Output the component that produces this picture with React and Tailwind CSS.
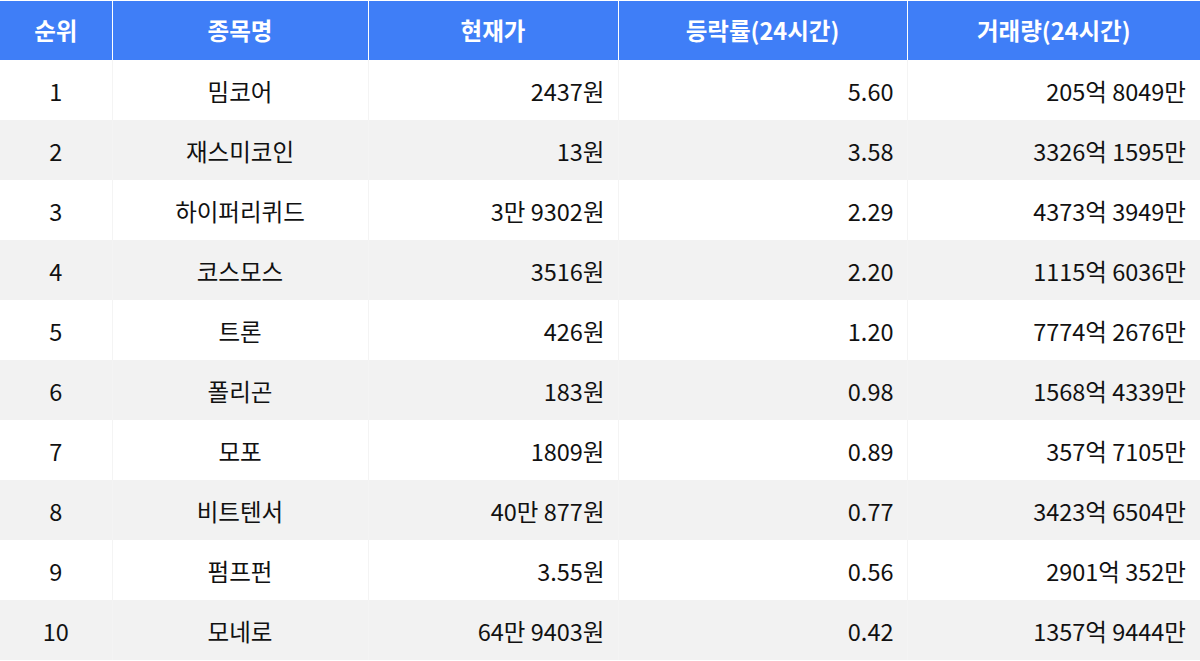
import React from 'react'

const rows = [
  ['1', '밈코어', '2437원', '5.60', '205억 8049만'],
  ['2', '재스미코인', '13원', '3.58', '3326억 1595만'],
  ['3', '하이퍼리퀴드', '3만 9302원', '2.29', '4373억 3949만'],
  ['4', '코스모스', '3516원', '2.20', '1115억 6036만'],
  ['5', '트론', '426원', '1.20', '7774억 2676만'],
  ['6', '폴리곤', '183원', '0.98', '1568억 4339만'],
  ['7', '모포', '1809원', '0.89', '357억 7105만'],
  ['8', '비트텐서', '40만 877원', '0.77', '3423억 6504만'],
  ['9', '펌프펀', '3.55원', '0.56', '2901억 352만'],
  ['10', '모네로', '64만 9403원', '0.42', '1357억 9444만'],
]

const headers = ['순위', '종목명', '현재가', '등락률(24시간)', '거래량(24시간)']

export default function App() {
  return (
    <div className="w-[1200px] h-[661px] bg-white pt-px font-['Noto_Sans_CJK_KR','Noto_Sans',sans-serif] text-[23.5px] text-[#111]">
      <table className="w-full table-fixed border-collapse">
        <colgroup>
          <col className="w-[112px]" />
          <col className="w-[256px]" />
          <col className="w-[250px]" />
          <col className="w-[289px]" />
          <col />
        </colgroup>
        <thead>
          <tr className="h-[59px] bg-[#3f7ef7] text-white">
            {headers.map((h, i) => (
              <th key={i} className="border-x border-white font-bold text-center first:border-l-0 last:border-r-0">
                {h}
              </th>
            ))}
          </tr>
        </thead>
        <tbody>
          {rows.map((r, i) => (
            <tr key={i} className={i % 2 === 1 ? 'h-[60px] bg-[#f2f2f2]' : 'h-[60px] bg-white'}>
              <td className="border-x border-[#f4f4f4] border-l-0 pt-[3px] text-center">{r[0]}</td>
              <td className="border-x border-[#f4f4f4] pt-[3px] text-center">{r[1]}</td>
              <td className="border-x border-[#f4f4f4] pt-[3px] text-right pr-[13px]">{r[2]}</td>
              <td className="border-x border-[#f4f4f4] pt-[3px] text-right pr-[13px]">{r[3]}</td>
              <td className="border-x border-[#f4f4f4] border-r-0 pt-[3px] text-right pr-[14px]">{r[4]}</td>
            </tr>
          ))}
        </tbody>
      </table>
    </div>
  )
}
